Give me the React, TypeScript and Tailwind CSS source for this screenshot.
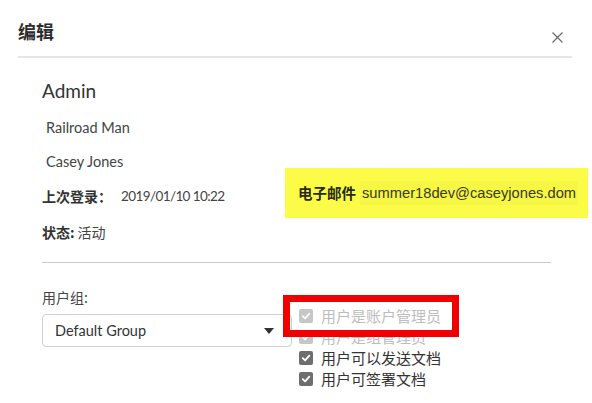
import React from "react";

function Check({ disabled }: { disabled?: boolean }) {
  return (
    <span
      className={
        "flex h-[14px] w-[14px] items-center justify-center rounded-[2px] " +
        (disabled ? "bg-[#c6c6c6]" : "bg-[#6e6e6e]")
      }
    >
      <svg width="10" height="10" viewBox="0 0 10 10">
        <path d="M1.8 5.2 L4.1 7.4 L8.3 2.6" fill="none" stroke="#ffffff" strokeWidth="1.8" strokeLinecap="round" strokeLinejoin="round" />
      </svg>
    </span>
  );
}

export default function App() {
  const rows = [
    { t: "用户是账户管理员", d: true },
    { t: "用户是组管理员", d: true },
    { t: "用户可以发送文档", d: false },
    { t: "用户可签署文档", d: false },
  ];
  return (
    <div className="relative h-[403px] w-[592px] overflow-hidden bg-white font-['Lato','Noto_Sans_CJK_SC',sans-serif] text-[#444]">
      <div className="w-[572px] pl-[18px]">
        <div className="flex h-[56px] items-start justify-between">
          <div className="mt-[19px] text-[18px] font-bold leading-[24px] text-[#2c2c2c] font-['Noto_Sans_CJK_SC',sans-serif]">编辑</div>
          <svg className="mr-[9px] mt-[32px]" width="11" height="11" viewBox="0 0 11 11">
            <path d="M0.5 0.5 L10.5 10.5 M10.5 0.5 L0.5 10.5" stroke="#6a6a6a" strokeWidth="1.2" />
          </svg>
        </div>
        <div className="h-[2px] bg-[#e6e6e6]" />
        <div className="pl-[24px]">
          <div className="mt-[21px] text-[19px] leading-[24px] text-[#333]">Admin</div>
          <div className="ml-[4px] mt-[15px] text-[14.5px] leading-[20px]">Railroad Man</div>
          <div className="ml-[4px] mt-[14px] text-[14.5px] leading-[20px]">Casey Jones</div>
          <div className="mt-[14px] flex text-[14px] leading-[20px]">
            <span className="w-[79px] font-bold text-[#333] font-['Noto_Sans_CJK_SC',sans-serif]">上次登录：</span>
            <span className="text-[13.5px] tracking-[-0.6px]">2019/01/10 10:22</span>
          </div>
          <div className="mt-[16px] flex text-[14px] leading-[20px] font-['Noto_Sans_CJK_SC',sans-serif]">
            <span className="font-bold text-[#333]">状态:</span>
            <span className="ml-[3px]">活动</span>
          </div>
          <div className="mt-[20px] h-px w-[509px] bg-[#c9c9c9]" />
          <div className="mt-[24px] flex">
            <div className="w-[250px]">
              <div className="text-[14px] leading-[20px] font-['Noto_Sans_CJK_SC',sans-serif]">用户组:</div>
              <div className="mt-[7px] flex h-[33px] items-center justify-between rounded-[4px] border border-[#cfcfcf] pl-[12px] pr-[17px]">
                <span className="text-[14.5px] text-[#333]">Default Group</span>
                <svg width="10" height="6" viewBox="0 0 10 6">
                  <path d="M0 0 L10 0 L5 6 Z" fill="#333" />
                </svg>
              </div>
            </div>
            <div className="ml-[7px] mt-[18px] flex flex-col">
              {rows.map((r) => (
                <div key={r.t} className="flex h-[21px] items-center">
                  <Check disabled={r.d} />
                  <span
                    className={
                      "ml-[8px] text-[15px] leading-[21px] font-['Noto_Sans_CJK_SC',sans-serif] " +
                      (r.d ? "text-[#bdbdbd]" : "text-[#333]")
                    }
                  >
                    {r.t}
                  </span>
                </div>
              ))}
            </div>
          </div>
        </div>
      </div>

      <div className="absolute left-[285px] top-[168px] flex h-[50px] w-[303px] items-center bg-[#fcfc48] pl-[13px]">
        <span className="text-[14.5px] font-bold text-[#2a2a10] font-['Noto_Sans_CJK_SC',sans-serif]">电子邮件</span>
        <span className="ml-[4px] bg-[#f6f645] px-[2px] text-[14.7px] leading-[24px] text-[#3a3a20] font-['Liberation_Sans',Arial,sans-serif]">
          summer18dev@caseyjones.dom
        </span>
      </div>

      <div className="absolute left-[283px] top-[295px] h-[42px] w-[176px] border-[7px] border-[#f00000]" />
    </div>
  );
}
